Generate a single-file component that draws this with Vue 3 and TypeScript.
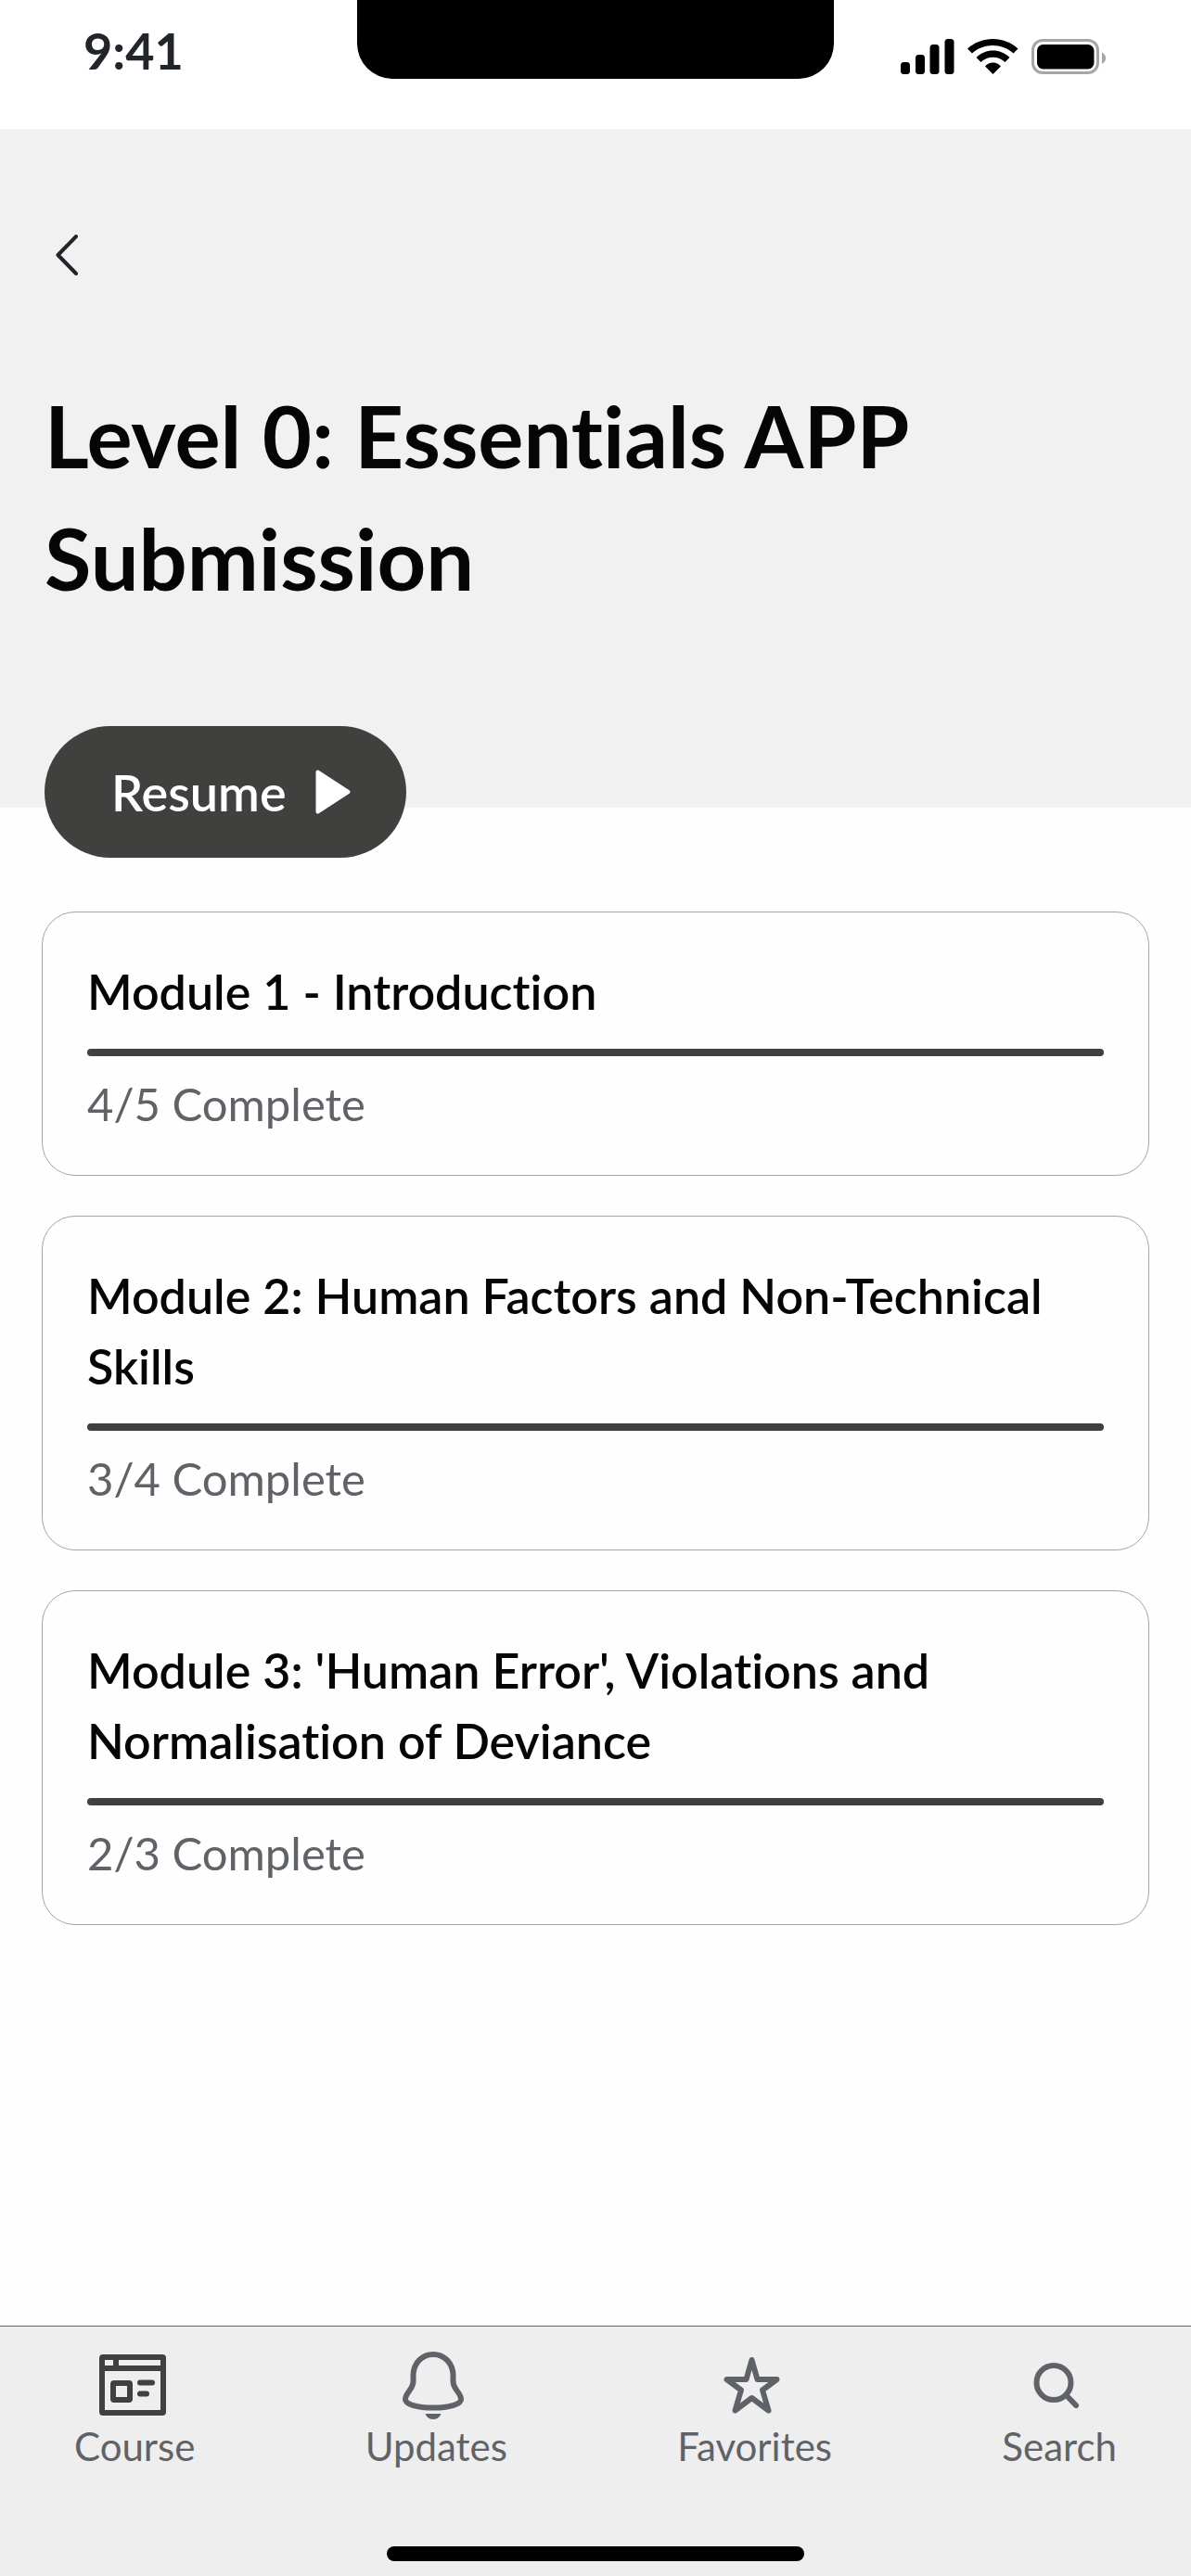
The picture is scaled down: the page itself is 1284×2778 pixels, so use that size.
<script setup lang="ts">
interface Module {
  title: string
  done: number
  total: number
}

const modules: Module[] = [
  { title: 'Module 1 - Introduction', done: 4, total: 5 },
  { title: 'Module 2: Human Factors and Non-Technical Skills', done: 3, total: 4 },
  { title: "Module 3: 'Human Error', Violations and Normalisation of Deviance", done: 2, total: 3 },
]
</script>

<template>
  <div class="screen">
    <div class="status-bar">
      <span class="time">9:41</span>
      <div class="notch"></div>
      <svg class="status-icons" viewBox="0 0 222 38" aria-hidden="true">
        <rect x="0" y="25" width="10" height="13" rx="3.5" />
        <rect x="16" y="17" width="10" height="21" rx="3.5" />
        <rect x="31.500" y="6" width="10" height="32" rx="3.5" />
        <rect x="47.500" y="0" width="10" height="38" rx="3.5" />
        <path d="M99.500 38 91 29.500C95.500 24 103.500 24 108 29.500Z" />
        <path d="M86.500 25 81.500 20C91.500 10 107.500 10 117.500 20L112.500 25C105 18 94 18 86.500 25Z" />
        <path d="M77 15.500 72 10.500C87.500-3.500 111.500-3.500 126.500 10.500L121.500 15.500C109 4 89.500 4 77 15.500Z" />
        <rect x="142.500" y="1.500" width="70" height="35" rx="10.5" fill="none" stroke="#a6a6a6" stroke-width="3" />
        <rect x="147" y="6" width="61.500" height="26.500" rx="6.5" />
        <path d="M217 14.500C222.500 17 222.500 24.500 217 27Z" fill="#a6a6a6" />
      </svg>
    </div>

    <header class="hero">
      <button class="back" type="button" aria-label="Back">
        <svg width="24" height="44" viewBox="0 0 24 44" aria-hidden="true">
          <path d="M22 2 2.500 22 22 42" />
        </svg>
      </button>
      <h1>Level 0: Essentials APP Submission</h1>
    </header>

    <main>
      <button class="resume" type="button">
        Resume
        <svg width="38" height="48" viewBox="0 0 38 48" aria-hidden="true">
          <path d="M2.500 2.500V45.500L35.500 24Z" />
        </svg>
      </button>
      <ul class="modules">
        <li v-for="item in modules" :key="item.title" class="card">
          <h2>{{ item.title }}</h2>
          <div class="bar"></div>
          <p>{{ item.done }}/{{ item.total }} Complete</p>
        </li>
      </ul>
    </main>

    <footer class="tab-bar">
      <nav>
        <a href="#course" aria-current="page">
          <svg class="dark" viewBox="0 0 80 76" aria-hidden="true">
            <rect x="5" y="7" width="66" height="60" rx="1" />
            <path d="M5 19H71M20 7V19" />
            <rect x="17" y="35" width="18" height="18" rx="1" />
            <path d="M46 34.500H59M46 46.500H53" />
          </svg>
          Course
        </a>
        <a href="#updates">
          <svg viewBox="0 0 80 76" aria-hidden="true">
            <path d="M37 4C24.500 4 15.500 14 15.500 27V33C15.500 42 7 45 7 52.500C7 58 20 61.500 37 61.500S67 58 67 52.500C67 45 58.500 42 58.500 33V27C58.500 14 49.500 4 37 4Z" />
            <path class="solid" d="M28.500 68H45.500C44 72 41 74 37 74S30 72 28.500 68Z" />
          </svg>
          Updates
        </a>
        <a href="#favorites">
          <svg viewBox="0 0 80 76" aria-hidden="true">
            <path d="M36.500 10 42.500 31H63.500L48 42.500 54.500 64.500 36.500 51 18.500 64.500 25 42.500 9.500 31H30.500Z" />
          </svg>
          Favorites
        </a>
        <a href="#search">
          <svg viewBox="0 0 80 76" aria-hidden="true">
            <circle cx="34" cy="34.500" r="18.500" />
            <path d="M47.500 48 58 59" />
          </svg>
          Search
        </a>
      </nav>
      <div class="home-indicator"></div>
    </footer>
  </div>
</template>

<style>
body {
  margin: 0;
}
</style>

<style scoped>
.screen {
  display: flex;
  flex-direction: column;
  min-height: 100vh;
  background: #fefefe;
  color: #040506;
  font-family: Lato, "Open Sans", sans-serif;
  font-variant-ligatures: none;
}

.status-bar {
  display: grid;
  grid-template-columns: 1fr 40% 1fr;
  height: 139px;
  background: #fff;
}

.time {
  padding: 23px 0 0 90px;
  color: #212529;
  font-size: 54px;
  font-weight: 700;
  line-height: 64px;
}

.notch {
  height: 85px;
  border-radius: 0 0 38px 38px;
  background: #000;
}

.status-icons {
  justify-self: end;
  width: 222px;
  height: 38px;
  margin: 42px 91px 0 0;
}

.hero {
  padding: 114px 48px 203px;
  background: #f1f1f1;
}

.back {
  display: block;
  margin: 0 0 107px;
  padding: 0 12px;
  border: 0;
  background: none;
}

.back svg {
  display: block;
  fill: none;
  stroke: #212529;
  stroke-width: 4;
  stroke-linecap: round;
  stroke-linejoin: round;
}

h1 {
  margin: 0;
  font-size: 92px;
  font-weight: 700;
  line-height: 132px;
}

main {
  padding: 0 45px 43px;
}

.resume {
  display: flex;
  align-items: center;
  gap: 31px;
  height: 142px;
  margin: -88px 0 58px 3px;
  padding: 0 60px 0 72px;
  border: 0;
  border-radius: 71px;
  background: #40403e;
  color: #fff;
  font: inherit;
  font-size: 54px;
  font-weight: 600;
}

.resume svg {
  fill: #fff;
  stroke: #fff;
  stroke-width: 4;
  stroke-linejoin: round;
}

.modules {
  display: flex;
  flex-direction: column;
  gap: 43px;
  margin: 0;
  padding: 0;
  list-style: none;
}

.card {
  padding: 47px 48px 41px;
  border: 1px solid #a4a4a4;
  border-radius: 36px;
}

h2 {
  margin: 0 0 24px;
  font-size: 52px;
  font-weight: 600;
  line-height: 76px;
}

.bar {
  height: 8px;
  margin-bottom: 15px;
  border-radius: 4px;
  background: #40403f;
}

p {
  margin: 0;
  color: #5f6368;
  font-size: 49px;
  line-height: 72px;
}

.tab-bar {
  margin-top: auto;
  padding: 26px 80px 16px;
  border-top: 1px solid #5f6368;
  background: #eee;
}

nav {
  display: flex;
  justify-content: space-between;
}

nav a {
  display: flex;
  flex-direction: column;
  align-items: center;
  gap: 3px;
  color: #5f6368;
  font-size: 42px;
  line-height: 48px;
  text-decoration: none;
}

nav svg {
  width: 80px;
  height: 76px;
  fill: none;
  stroke: #5f6368;
  stroke-width: 6;
  stroke-linecap: round;
  stroke-linejoin: round;
}

nav svg.dark {
  stroke: #40403f;
}

nav .solid {
  fill: #5f6368;
  stroke: none;
}

.home-indicator {
  width: 40%;
  height: 16px;
  margin: 84px auto 0;
  border-radius: 8px;
  background: #000;
}
</style>
